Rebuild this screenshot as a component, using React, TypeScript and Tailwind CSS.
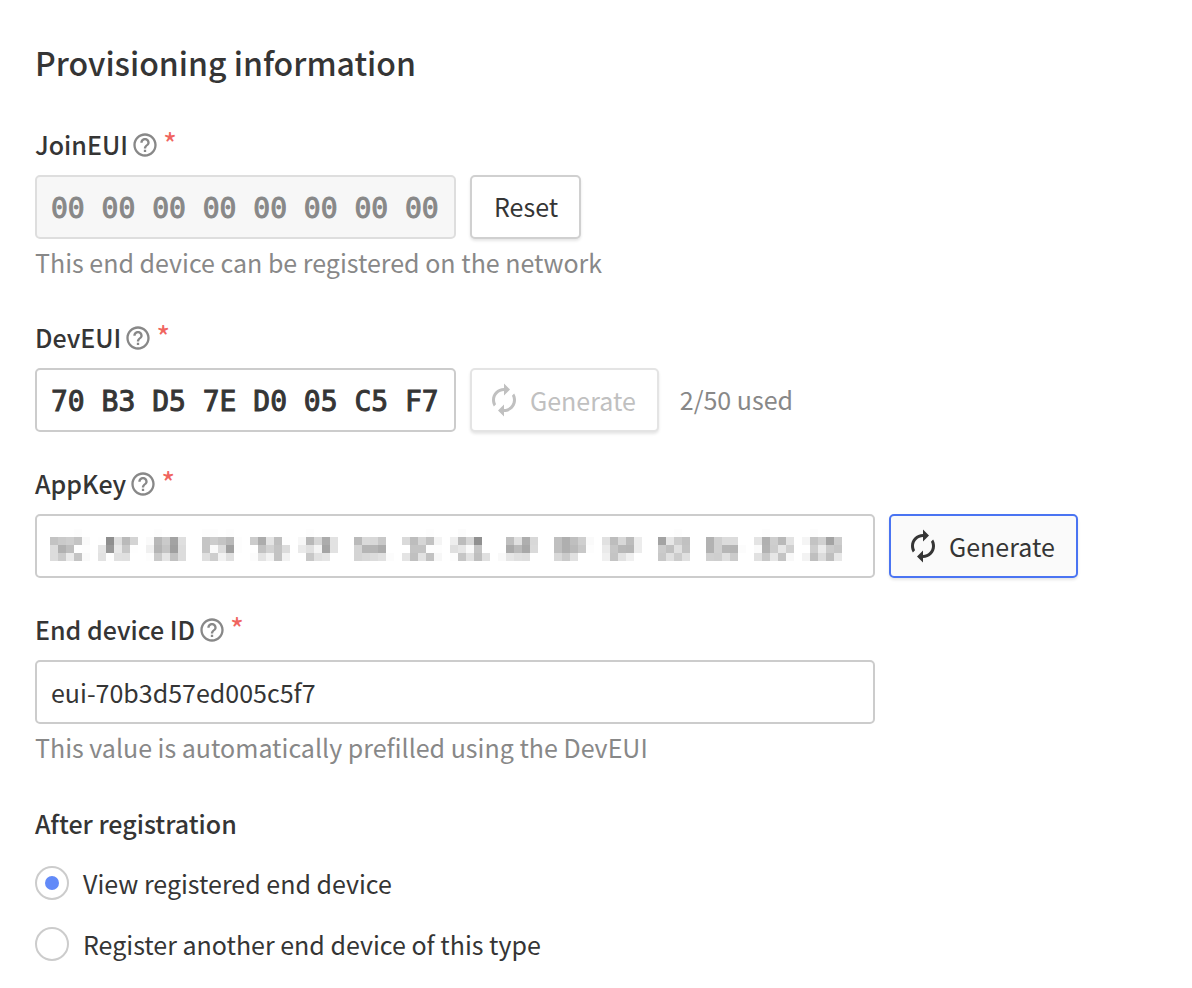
import { useState } from 'react'
import type { ReactNode } from 'react'
import { MdAutorenew, MdHelpOutline } from 'react-icons/md'

const CELL = 8

// Each block: first column, then the grey levels of its four rows (".." is empty).
const maskedBlocks: [number, string[]][] = [
  [0, ['......FD', 'C3CACEC4FA', 'DCB1BEFEFD', 'DCCBEAC4FA']],
  [6, ['', 'FE8EDEBAD4', 'E598E8C8FE', 'E2FEE1E0']],
  [12, ['..FD', 'FAB8CAA3DF', 'F0B4C49FDC', 'FDCAE5C1DC']],
  [19, ['FDFD..FD', 'C5CCC4B9FD', 'C5F9DCA0FD', 'DFCEF2E0']],
  [25, ['', 'CCACE4BFFE', '..C2D2C3DC', 'FCE3F2C3F2']],
  [31, ['..FD', 'F7B8D6ACE2', 'EAE0F4A5E2', '..C8E1E5']],
  [38, ['', 'BADAD8C8', 'D4B5B5AC', 'D4D8DCE1FC']],
  [44, ['......FD', 'DABDD6C2F4', '..C4C4FDFD', 'E4C0E2C2F7']],
  [50, ['..FC', 'EEBCD690', 'DFE6F9C4', 'FCC6E2BFE0']],
  [56, ['', '..BFE0AED8', '..AABAA8DA', 'F9E6E0DE']],
  [63, ['', 'BFAFBFCFFA', 'BFAFBAC8FD', 'D8CAE1']],
  [69, ['', 'E1BDD8BCEC', 'EAC6B8B6EC', 'F0C4E2F0']],
  [76, ['....FD', 'A3E6CCC1', 'CBC0E0C3', 'C8E0CCE0']],
  [82, ['', 'B2D0DCDC', 'B2D0B6B4FC', 'D0CEDFCB']],
  [88, ['..FD', 'E4B0CEB9E3', 'FAB2CCE6D0', 'E1C8E6C4F8']],
  [94, ['..FD', 'F5C3D0A3CC', '..CDEACBC6', 'F3BFDCBFE7']],
]

function MaskedKey() {
  return (
    <svg
      className="pointer-events-none absolute top-[15px] left-[15px]"
      width={99 * CELL}
      height={4 * CELL}
      shapeRendering="crispEdges"
      aria-hidden="true"
    >
      {maskedBlocks.map(([start, rows]) =>
        rows.map((row, y) =>
          (row.match(/../g) ?? []).map((level, x) =>
            level === '..' ? null : (
              <rect
                key={`${start}-${y}-${x}`}
                x={(start + x) * CELL}
                y={y * CELL}
                width={CELL}
                height={CELL}
                fill={`#${level}${level}${level}`}
              />
            ),
          ),
        ),
      )}
    </svg>
  )
}

const inputBase = 'h-16 w-full rounded-[5px] border-2 px-[14px] outline-none'
const byteInput = 'pt-[2px] font-["DejaVu_Sans_Mono",monospace] text-[28px] [-webkit-text-stroke:1px]'

function Field({ id, label, help, children }: { id: string; label: string; help?: string; children: ReactNode }) {
  return (
    <div className="flex flex-col">
      <div className="mb-3 flex h-9 items-center">
        <label htmlFor={id} className="pb-[3px] font-medium">
          {label}
        </label>
        <MdHelpOutline className="ml-[3px] size-7 text-[#888888]" aria-hidden="true" />
        <span className="ml-1 pb-1 text-[30px] text-[#f0655f]">*</span>
      </div>
      <div className="flex items-center gap-[14px]">{children}</div>
      {help && <p className="mt-2 pb-[9px] leading-[30px] text-[#888888]">{help}</p>}
    </div>
  )
}

function GenerateButton({ disabled = false }: { disabled?: boolean }) {
  return (
    <button
      type="button"
      disabled={disabled}
      className="flex h-16 shrink-0 items-center gap-2 rounded-[5px] border-2 border-[#4a74f2] bg-[#fafafa] pr-[21px] pl-[14px] shadow-[0_2px_3px_rgba(0,0,0,0.1)] disabled:border-[#e4e4e4] disabled:bg-white disabled:text-[#c0c0c0]"
    >
      <MdAutorenew className="size-9" aria-hidden="true" />
      Generate
    </button>
  )
}

const choices = [
  { value: 'view', label: 'View registered end device' },
  { value: 'another', label: 'Register another end device of this type' },
]

export default function App() {
  const [next, setNext] = useState('view')
  return (
    <main className='min-h-screen bg-white px-[35px] pt-[42px] pb-6 font-["Noto_Sans_CJK_SC",sans-serif] text-[25px] leading-9 text-[#353535]'>
      <h1 className="mb-[45px] text-[32px] leading-10 font-medium">Provisioning information</h1>
      <form className="flex flex-col gap-[34px]">
        <Field id="join-eui" label="JoinEUI" help="This end device can be registered on the network">
          <div className="w-[421px]">
            <input
              id="join-eui"
              disabled
              defaultValue="00 00 00 00 00 00 00 00"
              className={`${inputBase} ${byteInput} border-[#dedede] bg-[#f7f7f7] text-[#888888]`}
            />
          </div>
          <button
            type="button"
            className="h-16 rounded-[5px] border-2 border-[#d0d0d0] bg-white pr-[21px] pb-[2px] pl-[22px] shadow-[0_2px_3px_rgba(0,0,0,0.1)]"
          >
            Reset
          </button>
        </Field>
        <Field id="dev-eui" label="DevEUI">
          <div className="w-[421px]">
            <input
              id="dev-eui"
              defaultValue="70 B3 D5 7E D0 05 C5 F7"
              className={`${inputBase} ${byteInput} border-[#cccccc] bg-white`}
            />
          </div>
          <GenerateButton disabled />
          <span className="ml-[7px] pb-[2px] text-[#888888]">2/50 used</span>
        </Field>
        <Field id="app-key" label="AppKey">
          <div className="relative w-[840px]">
            <input id="app-key" className={`${inputBase} ${byteInput} border-[#cccccc] bg-white`} />
            <MaskedKey />
          </div>
          <GenerateButton />
        </Field>
        <Field id="device-id" label="End device ID" help="This value is automatically prefilled using the DevEUI">
          <div className="w-[840px]">
            <input
              id="device-id"
              defaultValue="eui-70b3d57ed005c5f7"
              className={`${inputBase} border-[#cccccc] bg-white`}
            />
          </div>
        </Field>
        <fieldset>
          <legend className="mb-[25px] font-medium">After registration</legend>
          <div className="flex flex-col gap-[27px]">
            {choices.map(({ value, label }) => (
              <label key={value} className="flex h-[34px] items-center gap-[14px]">
                <input
                  type="radio"
                  name="after"
                  value={value}
                  checked={next === value}
                  onChange={() => setNext(value)}
                  className="grid size-[34px] shrink-0 appearance-none place-items-center rounded-full border-2 border-[#cccccc] bg-white before:size-[14px] before:rounded-full checked:before:bg-[#628af8]"
                />
                {label}
              </label>
            ))}
          </div>
        </fieldset>
      </form>
    </main>
  )
}
